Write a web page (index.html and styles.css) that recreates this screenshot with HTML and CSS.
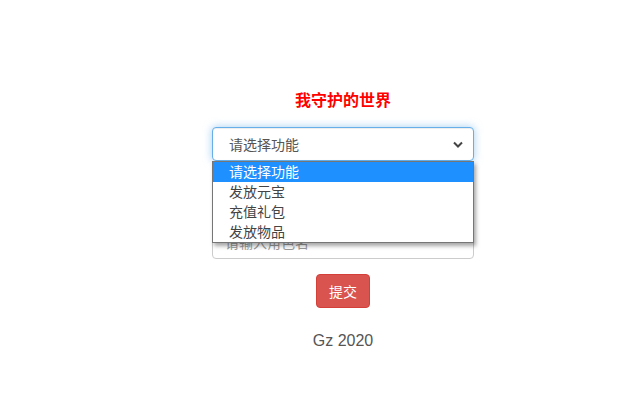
FILE: index.html
```html
<!DOCTYPE html>
<html lang="zh-CN">
<head>
<meta charset="utf-8">
<title>我守护的世界</title>
<link rel="stylesheet" href="styles.css">
</head>
<body>
<div class="page">
  <div class="col">
    <h3 class="title">我守护的世界</h3>
    <div class="form-group select-group">
      <div class="form-control select focus">
        <span class="select-text">请选择功能</span>
        <svg class="chev" width="10" height="7" viewBox="0 0 10 7"><polyline points="1,1.5 5,5.5 9,1.5" fill="none" stroke="#444" stroke-width="2"/></svg>
      </div>
      <ul class="dropdown">
        <li class="opt active">请选择功能</li>
        <li class="opt">发放元宝</li>
        <li class="opt">充值礼包</li>
        <li class="opt">发放物品</li>
      </ul>
    </div>
    <div class="form-group">
      <div class="form-control input"></div>
    </div>
    <div class="form-group">
      <div class="form-control input"><span class="ph">请输入角色名</span></div>
    </div>
    <div class="actions">
      <button class="btn">提交</button>
    </div>
    <p class="footer">Gz 2020</p>
  </div>
</div>
</body>
</html>
```
FILE: styles.css
```css
* { box-sizing: border-box; }
body {
  margin: 0;
  background: #fff;
  font-family: "Liberation Sans", "Noto Sans CJK SC", sans-serif;
  font-size: 14px;
  color: #333;
}
.page { padding-top: 90px; }
.col { width: 262px; margin-left: 212px; }
.title {
  margin: 0 0 15px;
  height: 22px;
  line-height: 22px;
  text-align: center;
  color: #f00;
  font-size: 16px;
  font-weight: bold;
}
.form-group { margin-bottom: 15px; }
.select-group { position: relative; }
.form-control {
  height: 34px;
  border: 1px solid #ccc;
  border-radius: 4px;
  padding: 0 12px;
  display: flex;
  align-items: center;
  background: #fff;
}
.select { padding-left: 16px; padding-right: 10px; justify-content: space-between; color: #555; }
.focus {
  border-color: #66afe9;
  box-shadow: inset 0 1px 1px rgba(0,0,0,.075), 0 0 8px rgba(102,175,233,.6);
}
.chev { display: block; }
.ph { color: #999; }
.dropdown {
  position: absolute;
  left: 0;
  top: 34px;
  width: 262px;
  margin: 0;
  padding: 0;
  list-style: none;
  background: #fff;
  border: 1px solid #767676;
  box-shadow: 2px 3px 4px rgba(0,0,0,.35);
  z-index: 5;
}
.opt {
  height: 20px;
  line-height: 20px;
  padding-left: 16px;
  color: #444;
}
.opt.active { background: #1e90ff; color: #fff; }
.actions { display: flex; justify-content: center; }
.btn {
  height: 34px;
  padding: 0 12px;
  border: 1px solid #d43f3a;
  border-radius: 4px;
  background: #d9534f;
  color: #fff;
  font-family: inherit;
  font-size: 14px;
}
.footer {
  margin: 22px 0 0;
  text-align: center;
  font-size: 16px;
  line-height: 22px;
  color: #555;
}
```
